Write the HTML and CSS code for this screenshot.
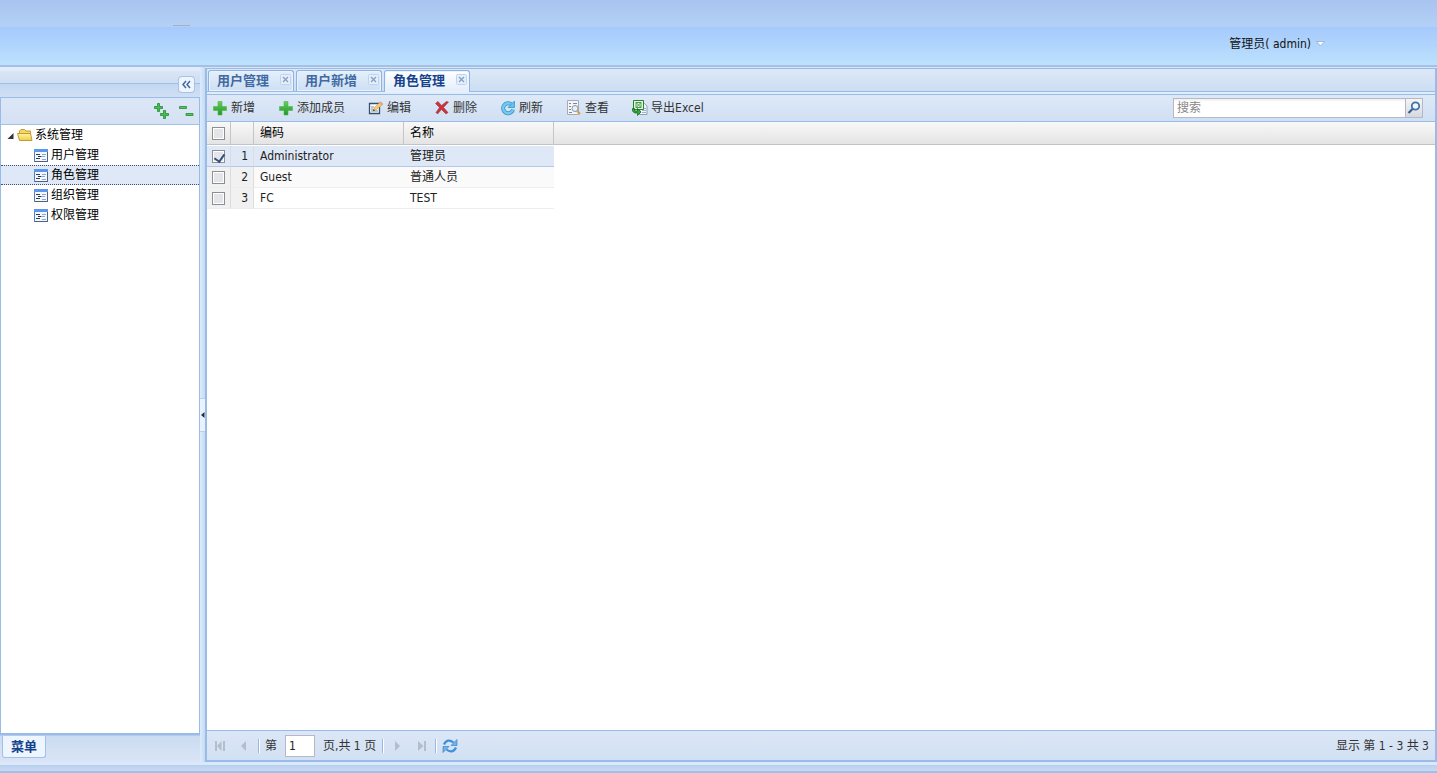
FILE: index.html
```html
<!DOCTYPE html>
<html lang="zh-CN">
<head>
<meta charset="utf-8">
<title>角色管理</title>
<link rel="stylesheet" href="styles.css">
</head>
<body>
<svg class="defs" aria-hidden="true">
  <defs>
    <linearGradient id="green" x1="0" y1="0" x2="0" y2="1"><stop offset="0" stop-color="#6bcb5d"/><stop offset="1" stop-color="#1f972a"/></linearGradient>
    <linearGradient id="gold" x1="0" y1="0" x2="0" y2="1"><stop offset="0" stop-color="#fff6a8"/><stop offset="1" stop-color="#f2cb45"/></linearGradient>
    <symbol id="add" viewBox="0 0 16 16"><path d="M6 1.500h4v5h4.500v4H10v4.500H6v-4.500H1.500v-4H6z" fill="url(#green)" stroke="#4cb848" stroke-width=".6"/></symbol>
    <symbol id="form" viewBox="0 0 16 16"><path d="M1.500 2.500h13v12h-13z" fill="#f4f8fe" stroke="#4a7fc9"/><path d="M1 2h14v3H1z" fill="#5b97ea"/><path d="M14.500 5v9.500H1.500" fill="none" stroke="#50607c"/><path d="M3 7.500h4M3 11.500h4" stroke="#333c4e"/><path d="M9 7.500h4M8 9.500h4M9 12.500h4" stroke="#86a9da"/><path d="M5 9.500h3" stroke="#333"/></symbol>
    <symbol id="close" viewBox="0 0 11 11"><rect x=".5" y=".5" width="10" height="10" rx="1" fill="#e3effd" stroke="#c0d3ec"/><path d="M3 3l5 5M8 3L3 8" stroke="#8a9fc0" stroke-width="1.400"/></symbol>
    <symbol id="prev" viewBox="0 0 16 16"><path d="M10 3v10L5 8z" fill="#b4bdca"/></symbol>
  </defs>
</svg>
<div class="app">
  <header class="banner">
    <div class="banner-top"><span class="logo-mark"></span></div>
    <div class="banner-user"><button class="user" type="button">管理员( admin)<svg width="9" height="6" viewBox="0 0 9 6"><path d="M.5.500h8L4.500 5z" fill="#fff" stroke="#93a9c9" stroke-width=".8"/></svg></button></div>
  </header>
  <div class="workspace">
    <aside class="side">
      <div class="side-title">
        <button class="collapse" type="button" aria-label="收起"><svg width="15" height="15" viewBox="0 0 15 15"><path d="M7 4L4 7.500 7 11M11 4L8 7.500 11 11" fill="none" stroke="#41699c" stroke-width="1.500"/></svg></button>
      </div>
      <div class="side-panel">
        <div class="side-tools">
          <button class="icon-button" type="button" aria-label="全部展开"><svg width="16" height="16" viewBox="0 0 16 16"><g fill="#45bf50" stroke="#238b30" stroke-width=".8"><path d="M3.500.500h2v3h3v2h-3v3h-2v-3h-3v-2h3z"/><path d="M9.500 7.500h2v3h3v2h-3v3h-2v-3h-3v-2h3z"/></g></svg></button>
          <button class="icon-button" type="button" aria-label="全部收起"><svg width="16" height="16" viewBox="0 0 16 16"><g fill="#58c463" stroke="#238b30" stroke-width=".8"><path d="M1.500 3.500h7v2h-7zM8 10.500h7v2H8z"/></g></svg></button>
        </div>
        <ul class="tree">
          <li class="root"><svg width="9" height="9" viewBox="0 0 9 9"><path d="M7.500 2v6h-6z" fill="#333"/></svg><svg width="16" height="16" viewBox="0 0 16 16"><path d="M2.500 12V4l1.500-1.500h3.500L9 4h4.500v8" fill="#f5d867" stroke="#c49a35"/><path d="M2.500 13.500L.5 6.500H13.500l1.500 7z" fill="url(#gold)" stroke="#c49a35"/></svg><span>系统管理</span></li>
          <li><svg width="16" height="16"><use href="#form"/></svg><a href="#">用户管理</a></li>
          <li class="selected"><svg width="16" height="16"><use href="#form"/></svg><a href="#">角色管理</a></li>
          <li><svg width="16" height="16"><use href="#form"/></svg><a href="#">组织管理</a></li>
          <li><svg width="16" height="16"><use href="#form"/></svg><a href="#">权限管理</a></li>
        </ul>
      </div>
      <div class="side-tabs"><button class="menu-tab" type="button">菜单</button></div>
    </aside>
    <div class="splitter"><button class="grip" type="button" aria-label="收起侧栏"><svg width="5" height="8" viewBox="0 0 5 8"><path d="M4.500 1v6L1 4z" fill="#222f48"/></svg></button></div>
    <main class="content">
      <nav class="tabs">
        <div class="tab"><button type="button">用户管理</button><button class="close" type="button" aria-label="关闭"><svg width="11" height="11"><use href="#close"/></svg></button></div>
        <div class="tab"><button type="button">用户新增</button><button class="close" type="button" aria-label="关闭"><svg width="11" height="11"><use href="#close"/></svg></button></div>
        <div class="tab active"><button type="button">角色管理</button><button class="close" type="button" aria-label="关闭"><svg width="11" height="11"><use href="#close"/></svg></button></div>
      </nav>
      <div class="toolbar">
        <button type="button"><svg width="16" height="16"><use href="#add"/></svg>新增</button>
        <button type="button"><svg width="16" height="16"><use href="#add"/></svg>添加成员</button>
        <button type="button"><svg width="16" height="16" viewBox="0 0 16 16"><path d="M1.500 3.500h10v10h-10z" fill="#fff" stroke="#35506e" stroke-width="1.300"/><path d="M3 7h3M3 9h2M3 11h7" stroke="#7d8fa5"/><path d="M5.500 10.500l1-3 6-5.500 2.500 2-6.500 5.500z" fill="#f8cf72" stroke="#c99a4c" stroke-width=".7"/><path d="M11 3l1.500-1.500L15 4l-1.500 1.500z" fill="#e9a58b"/><path d="M5 11l.5-2 1.500 1.500z" fill="#333"/></svg>编辑</button>
        <button type="button"><svg width="16" height="16" viewBox="0 0 16 16"><path d="M1.500 3.500L4 1.500l3.500 4 5-4L14.500 2 9.500 7.500l4.500 5-2 1.500-4.500-4.500L3.500 14 2 12.500l3.500-5z" fill="#c8343d" stroke="#9d2430" stroke-width=".5"/></svg>删除</button>
        <button type="button"><svg width="16" height="16" viewBox="0 0 16 16"><path d="M11.500 4.500A5 5 0 1 0 13 9.500" fill="none" stroke="#3595cc" stroke-width="4"/><path d="M11.500 4.500A5 5 0 1 0 13 9.500" fill="none" stroke="#74c9ee" stroke-width="2.400"/><path d="M14.500 1v6.500H8z" fill="#69c1ea" stroke="#3595cc" stroke-width=".8"/></svg>刷新</button>
        <button type="button"><svg width="16" height="16" viewBox="0 0 16 16"><path d="M1.500.500h11v14h-11z" fill="#f4f5f7" stroke="#a4abb6"/><path d="M3 3.500h2M3 6.500h2M3 9.500h2M3 12.500h3M7 3.500h4" stroke="#7c8698"/><circle cx="9" cy="8.500" r="3" fill="#e4f0fb" stroke="#8b95a5"/><path d="M11 11l3 3" stroke="#d99a45" stroke-width="2"/></svg>查看</button>
        <button type="button"><svg width="16" height="16" viewBox="0 0 16 16"><path d="M8.500 3.500h4l2.500 2.500v8.500H7.500z" fill="#f2f6fb" stroke="#8ba0bb"/><path d="M10 8.500h4M10 10.500h4M10 12.500h4" stroke="#a2b3c8"/><path d="M1.500.500h10v9h-10z" fill="#e9f7e7" stroke="#26822c"/><path d="M4 2.500h5v5H4zM4 2.500l5 5M9 2.500l-5 5" fill="none" stroke="#38943d" stroke-width=".9"/><path d="M.5 8.500h2v2.500h3V8.500L9 12 5.500 15.500v-2.500h-3L.5 11z" fill="#2dab38" stroke="#126019" stroke-width=".7"/></svg>导出Excel</button>
        <form class="search"><input type="text" placeholder="搜索" aria-label="搜索"><button type="button" aria-label="查找"><svg width="16" height="16" viewBox="0 0 16 16"><circle cx="9.500" cy="6" r="3.700" fill="#eef5fc" stroke="#4272a8" stroke-width="1.800"/><path d="M6.500 9L2.500 13" stroke="#34608f" stroke-width="2.200"/></svg></button></form>
      </div>
      <div class="grid">
        <table>
          <thead><tr><th class="narrow first"><input type="checkbox" aria-label="全选"></th><th class="narrow"></th><th class="wide">编码</th><th class="wide">名称</th><th class="rest"></th></tr></thead>
          <tbody>
            <tr class="checked"><td class="narrow"><input type="checkbox" aria-label="选择 Administrator" checked></td><td class="number">1</td><td>Administrator</td><td>管理员</td><td class="rest"></td></tr>
            <tr class="alt"><td class="narrow"><input type="checkbox" aria-label="选择 Guest"></td><td class="number">2</td><td>Guest</td><td>普通人员</td><td class="rest"></td></tr>
            <tr><td class="narrow"><input type="checkbox" aria-label="选择 FC"></td><td class="number">3</td><td>FC</td><td>TEST</td><td class="rest"></td></tr>
          </tbody>
        </table>
      </div>
      <footer class="pager">
        <button type="button" aria-label="首页" disabled><svg width="16" height="16" viewBox="0 0 16 16"><path d="M3 3h2v10H3zM9.500 3v10L5 8zM11 3h2v10h-2z" fill="#b4bdca"/></svg></button>
        <button type="button" aria-label="上一页" disabled><svg width="16" height="16"><use href="#prev"/></svg></button>
        <span class="divider"></span>
        <label for="page">第</label>
        <input id="page" type="text" value="1">
        <span class="total">页,共 1 页</span>
        <span class="divider"></span>
        <button type="button" aria-label="下一页" disabled><svg class="flip" width="16" height="16"><use href="#prev"/></svg></button>
        <button type="button" aria-label="末页" disabled><svg class="flip" width="16" height="16" viewBox="0 0 16 16"><path d="M3 3h2v10H3zM11 3v10L5.500 8z" fill="#b4bdca"/></svg></button>
        <span class="divider"></span>
        <button type="button" aria-label="刷新"><svg width="16" height="16" viewBox="0 0 16 16"><g fill="none" stroke="#3f90dc" stroke-width="2.200"><path d="M2 6.500C4 2 8 1.500 11.500 4.500"/><path d="M14 9.500C12 14 8 14.500 4.500 11.500"/></g><path d="M15 1.500v6H9zM1 14.500v-6h6z" fill="#6db3ee" stroke="#2e78bd" stroke-width=".6"/></svg></button>
        <span class="summary">显示 第 1 - 3 共 3</span>
      </footer>
    </main>
  </div>
  <div class="bottom"></div>
</div>
</body>
</html>
```
FILE: styles.css
```css
* { box-sizing: border-box; }
body { margin: 0; }
body, button, input {
  font: 12px/16px "DejaVu Sans Condensed", "Noto Sans CJK SC", sans-serif;
  color: #222;
}
button { margin: 0; padding: 0; border: 0; background: none; white-space: nowrap; }
svg { display: block; flex: none; }
.defs { position: absolute; width: 0; height: 0; }
.app { display: flex; flex-direction: column; height: 100vh; background: #d5e5f8; }

.banner { border-bottom: 2px solid #a5c0e4; }
.banner-top { display: flex; align-items: flex-end; height: 27px; padding: 0 173px 1px; background: linear-gradient(#a9c3ef, #b3d1f6); }
.logo-mark { width: 17px; height: 1px; background: #a9aebc; }
.banner-user { display: flex; align-items: center; justify-content: flex-end; height: 38px; padding: 0 112px 4px 0; background: linear-gradient(#a5c9fc, #bce2fe); }
.user { display: flex; align-items: center; gap: 5px; color: #111; }

.workspace { display: flex; flex: 1; min-height: 0; }
.side { display: flex; flex-direction: column; width: 200px; padding-top: 4px; background: #e0ecfb; }
.side-title {
  display: flex; align-items: center; justify-content: flex-end; height: 26px; padding-right: 6px;
  background: linear-gradient(#dae5f5, #cfdef2 12px, #9fbfe8 12px, #9fbfe8 13px, #c3d7f1 13px, #d0e0f4);
}
.collapse { border-radius: 3px; background: #eef5fe; box-shadow: 0 0 0 1px #a9c3e6; }
.side-panel { display: flex; flex: 1; flex-direction: column; border: 1px solid #99bbe8; border-bottom-width: 2px; background: #fff; }
.side-tools { display: flex; align-items: center; justify-content: flex-end; gap: 8px; height: 27px; padding-right: 5px; border-bottom: 1px solid #a4c2e8; background: linear-gradient(#dce7f6, #d5e2f3); }
.tree { margin: 0; padding: 0; list-style: none; }
.tree li { display: flex; align-items: center; gap: 2px; height: 20px; padding-left: 32px; color: #000; }
.tree .root { padding-left: 5px; }
.tree a { color: #000; text-decoration: none; }
.tree .selected { border: 1px dotted #405070; border-width: 1px 0; background: #dfe8f6; }
.side-tabs { height: 27px; padding: 0 2px; border-top: 1px solid #b4cceb; background: linear-gradient(#cbdcf1, #d9e5f6); }
.menu-tab { height: 22px; padding: 0 8px; border: 1px solid #a3c0e6; border-top: 0; border-radius: 0 0 3px 3px; background: #edf5fe; color: #15428b; font-size: 13px; font-weight: bold; }

.splitter { display: flex; align-items: center; width: 5px; background: linear-gradient(90deg, #dcecfb, #c6daf2); }
.grip { display: grid; align-items: center; width: 5px; height: 34px; border: 1px solid #b9cfea; border-width: 1px 0; background: #e9f2fd; }

.content { display: flex; flex: 1; flex-direction: column; min-width: 0; margin-top: 1px; border: 1px solid #99bbe8; border-width: 1px 2px 2px; background: #fff; }
.tabs { display: flex; align-items: flex-end; gap: 2px; height: 26px; padding: 0 1px 3px; border-bottom: 1px solid #99bbe8; background: linear-gradient(#dce8f6, #ccdef3 22px, #99bbe8 22px, #99bbe8 23px, #e1edfb 23px); }
.tab { display: flex; align-items: flex-start; gap: 11px; height: 21px; padding: 0 2px 0 8px; border: 1px solid #8db2e3; border-bottom: 0; border-radius: 3px 3px 0 0; background: linear-gradient(#e5effb, #cddff4); box-shadow: inset 0 0 0 1px #eaf3fd; }
.tab button:first-child { color: #416aa3; font-size: 13px; font-weight: bold; line-height: 20px; }
.tab .close { padding-top: 3px; }
.tab.active { background: linear-gradient(#fff, #e1edfb); height: 22px; margin-bottom: -1px; }
.tab.active button:first-child { color: #15428b; }
.toolbar { display: flex; align-items: center; gap: 23px; height: 27px; padding: 0 12px 0 5px; border-bottom: 1px solid #99bbe8; background: linear-gradient(#dee9f8, #d0dff2); }
.toolbar button { display: flex; align-items: center; gap: 3px; color: #333; }
.search { display: flex; width: 250px; margin-left: auto; border: 1px solid #b5b8c8; background: #fff; }
.search input { flex: 1; min-width: 0; height: 18px; padding: 0 3px; border: 0; background: linear-gradient(#eee, #fff 3px); }
.search input::placeholder { color: #888; opacity: 1; }
.search button { padding: 0; border-left: 1px solid #b5b8c8; background: linear-gradient(#f5f5f5, #d5d9e0); }

.grid { flex: 1; min-height: 0; overflow: hidden; }
table { width: 100%; border-spacing: 0; table-layout: fixed; }
th { height: 23px; padding: 0 6px; border-right: 1px solid #c5c5c5; border-bottom: 1px solid #c0c4ca; background: linear-gradient(#f8f8f8, #e4e4e4); color: #000; font-weight: normal; text-align: left; }
td { height: 21px; padding: 0 6px; border-bottom: 1px solid #ededed; color: #222; }
th.narrow { width: 23px; }
th.first { width: 24px; }
th.wide { width: 150px; }
.narrow { padding: 0 5px; }
th.rest { border-right: 0; }
td.narrow, td.number { border-right: 1px solid #dcdcdc; background: #f1f1f1; }
td.number { padding: 0 5px; text-align: right; }
td.rest { border: 0; }
tbody::before { content: ""; display: table-row; height: 1px; }
.checked td:not(.rest) { border-bottom-color: #b5c9e6; background: #dfe8f6; }
.alt td:not(.rest, .narrow, .number) { background: #fafafa; }
input[type="checkbox"] { display: block; width: 13px; height: 13px; margin: 0; border: 1px solid #8c8f94; box-shadow: inset 0 0 0 1px #fff; background: #e3e5e8; appearance: none; }
input[type="checkbox"]:checked::before { content: ""; display: block; width: 5px; height: 8px; margin: 1px 0 0 3px; border: solid #354f80; border-width: 0 2px 2px 0; transform: rotate(35deg); }

.pager { display: flex; align-items: center; gap: 8px; height: 30px; padding: 0 6px 0 5px; border-top: 1px solid #99bbe8; background: linear-gradient(#dce7f6, #d1e0f3); color: #333; }
.pager input { width: 30px; height: 22px; padding: 0 3px; border: 1px solid #b5b8c8; background: #fff; }
.divider { width: 1px; height: 14px; margin: 0 -2px; background: #98b6df; box-shadow: 1px 0 #fff; }
.flip { transform: scaleX(-1); }
.summary { margin-left: auto; }
.bottom { height: 11px; border-top: 3px solid #d9e8fa; border-bottom: 2px solid #9fc0ea; background: linear-gradient(#b7cfee, #c8daf2); }
```
